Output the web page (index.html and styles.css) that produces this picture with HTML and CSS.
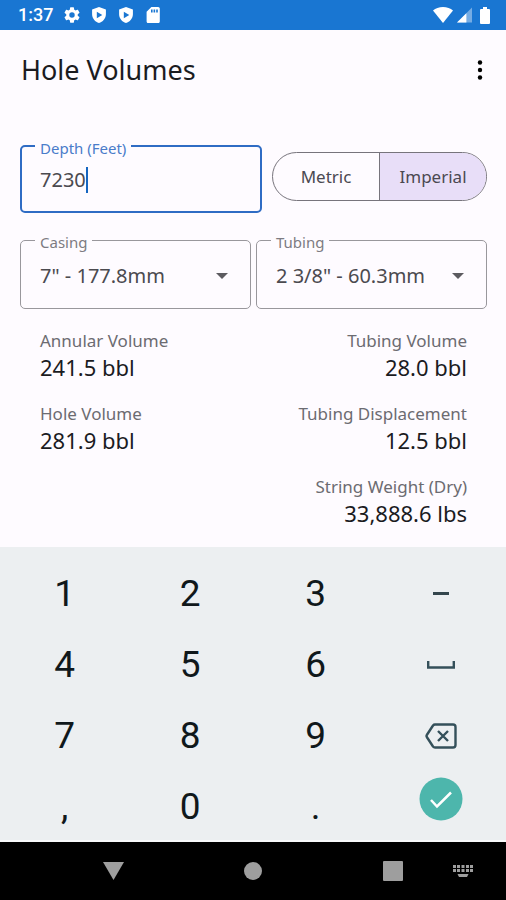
FILE: index.html
```html
<!DOCTYPE html>
<html lang="en">
<head>
<meta charset="utf-8">
<meta name="viewport" content="width=device-width, initial-scale=1">
<title>Hole Volumes</title>
<link rel="stylesheet" href="styles.css">
</head>
<body>
<div class="status-bar">
  <div class="status-left">
    <span class="clock">1:37</span>
    <svg class="status-icon" viewBox="2 2 20 20" aria-hidden="true"><path d="M19.14 12.94c.04-.3.06-.61.06-.94s-.02-.64-.07-.94l2.03-1.58a.49.49 0 0 0 .12-.61l-1.92-3.32a.49.49 0 0 0-.59-.22l-2.39.96a7 7 0 0 0-1.62-.94l-.36-2.54A.48.48 0 0 0 13.920 2.400h-3.840a.48.48 0 0 0-.47.41l-.36 2.54c-.59.24-1.13.57-1.620.94l-2.390-.96a.48.48 0 0 0-.59.22L2.740 8.870a.48.48 0 0 0 .12.61l2.030 1.580c-.05.3-.09.63-.09.94s.02.64.07.94l-2.030 1.580a.49.49 0 0 0-.12.61l1.920 3.320c.12.22.37.29.59.22l2.390-.96c.5.38 1.030.7 1.620.94l.36 2.540c.05.24.24.41.48.41h3.840c.24 0 .44-.17.47-.41l.36-2.540a7 7 0 0 0 1.620-.94l2.390.96c.22.08.47 0 .59-.22l1.920-3.320a.48.48 0 0 0-.12-.61zM12 15.400a3.400 3.400 0 1 1 0-6.800 3.400 3.400 0 0 1 0 6.800z"/></svg>
    <svg class="status-icon" viewBox="2 1 20 22" aria-hidden="true"><path fill-rule="evenodd" d="M12 1 2.500 4.500V11c0 5.600 4.300 10.700 9.500 12 5.200-1.300 9.500-6.400 9.500-12V4.500zM9 7.500l7.500 4.500L9 16.500z"/></svg>
    <svg class="status-icon" viewBox="2 1 20 22" aria-hidden="true"><path fill-rule="evenodd" d="M12 1 2.500 4.500V11c0 5.600 4.300 10.700 9.500 12 5.200-1.300 9.500-6.400 9.500-12V4.500zM9 7.500l7.500 4.500L9 16.500z"/></svg>
    <svg class="status-icon" viewBox="2 2 20 20" aria-hidden="true"><path fill-rule="evenodd" d="M18.500 2H10L4 8v12c0 1.100.9 2 2 2h12.500c1.100 0 2-.9 2-2V4c0-1.100-.9-2-2-2zM9.500 5h2v4h-2zM12.700 5h2v4h-2zM16 5h2v4h-2z"/></svg>
  </div>
  <div class="status-right">
    <svg class="wifi" viewBox="0 0 20 16" aria-hidden="true"><path d="M10 16 0 3.500C2.500 1.300 6 0 10 0s7.500 1.300 10 3.500z"/></svg>
    <svg class="signal" viewBox="0 0 16 16" aria-hidden="true"><path class="faint" d="M0 16 16 0v16z"/><path d="M0 16 10 6v10z"/></svg>
    <svg class="battery" viewBox="0 0 10 17" aria-hidden="true"><path d="M3 0h4v2h2q1 0 1 1v13q0 1-1 1H1q-1 0-1-1V3q0-1 1-1h2z"/></svg>
  </div>
</div>

<header class="app-bar">
  <h1 class="title">Hole Volumes</h1>
  <button class="menu-button" type="button" aria-label="More options">
    <svg viewBox="0 0 6 20" aria-hidden="true"><circle cx="3" cy="2.500" r="2.200"/><circle cx="3" cy="10" r="2.200"/><circle cx="3" cy="17.500" r="2.200"/></svg>
  </button>
</header>

<main class="content">
  <form class="form">
    <div class="row row-depth">
      <fieldset class="field field-focused">
        <legend><label for="depth">Depth (Feet)</label></legend>
        <div class="field-body">
          <input class="field-input" id="depth" type="text" inputmode="decimal" value="7230">
          <span class="caret"></span>
        </div>
      </fieldset>
      <div class="units" role="radiogroup" aria-label="Units">
        <label class="unit"><input type="radio" name="units" value="metric"><span>Metric</span></label>
        <label class="unit"><input type="radio" name="units" value="imperial" checked><span>Imperial</span></label>
      </div>
    </div>
    <div class="row row-pipe">
      <fieldset class="field">
        <legend><label for="casing">Casing</label></legend>
        <div class="field-body">
          <select class="field-select" id="casing"><option>7" - 177.8mm</option></select>
          <svg class="arrow" viewBox="0 0 12 6" aria-hidden="true"><path d="M0 0h12L6 6z"/></svg>
        </div>
      </fieldset>
      <fieldset class="field">
        <legend><label for="tubing">Tubing</label></legend>
        <div class="field-body">
          <select class="field-select" id="tubing"><option>2 3/8" - 60.3mm</option></select>
          <svg class="arrow" viewBox="0 0 12 6" aria-hidden="true"><path d="M0 0h12L6 6z"/></svg>
        </div>
      </fieldset>
    </div>
  </form>

  <div class="results">
    <dl class="result-list">
      <div><dt>Annular Volume</dt><dd>241.5 bbl</dd></div>
      <div><dt>Hole Volume</dt><dd>281.9 bbl</dd></div>
    </dl>
    <dl class="result-list result-list-end">
      <div><dt>Tubing Volume</dt><dd>28.0 bbl</dd></div>
      <div><dt>Tubing Displacement</dt><dd>12.5 bbl</dd></div>
      <div><dt>String Weight (Dry)</dt><dd>33,888.6 lbs</dd></div>
    </dl>
  </div>
</main>

<div class="keypad">
  <button class="key" type="button">1</button>
  <button class="key" type="button">2</button>
  <button class="key" type="button">3</button>
  <button class="key" type="button" aria-label="Minus"><svg class="minus" viewBox="0 0 16 3" aria-hidden="true"><path d="M0 0h16v3H0z"/></svg></button>
  <button class="key" type="button">4</button>
  <button class="key" type="button">5</button>
  <button class="key" type="button">6</button>
  <button class="key" type="button" aria-label="Space"><svg class="space" viewBox="0 0 28 8" aria-hidden="true"><path d="M1.200 0v6.500h25.600V0"/></svg></button>
  <button class="key" type="button">7</button>
  <button class="key" type="button">8</button>
  <button class="key" type="button">9</button>
  <button class="key" type="button" aria-label="Backspace"><svg class="backspace" viewBox="0 0 32 26" aria-hidden="true"><path d="M10 1.500h18q2.500 0 2.500 2.500v18q0 2.500-2.500 2.500H10q-1.200 0-2-1L1.800 14q-.6-1 0-2L8 2.500q.8-1 2-1zM13 8l10 10M23 8 13 18"/></svg></button>
  <button class="key" type="button">,</button>
  <button class="key" type="button">0</button>
  <button class="key" type="button">.</button>
  <button class="key key-done" type="button" aria-label="Done"><svg viewBox="0 0 44 44" aria-hidden="true"><circle cx="22" cy="22" r="21.500"/><path d="m12 23 6 6.500L32 15.500"/></svg></button>
</div>

<nav class="nav-bar" aria-label="System">
  <div class="nav-main">
    <button type="button" aria-label="Back"><svg class="back" viewBox="0 0 21 18" aria-hidden="true"><path d="M0 0h21l-10.500 18z"/></svg></button>
    <button type="button" aria-label="Home"><svg class="home" viewBox="0 0 18 18" aria-hidden="true"><circle cx="9" cy="9" r="9"/></svg></button>
    <button type="button" aria-label="Recent apps"><svg class="recent" viewBox="0 0 20 20" aria-hidden="true"><rect width="20" height="20" rx="1"/></svg></button>
  </div>
  <button type="button" aria-label="Switch keyboard"><svg class="keyboard" viewBox="0 0 20 12" aria-hidden="true"><path d="M0 0h3v3H0zM4 0h3v3H4zM8.500 0h3v3h-3zM13 0h3v3h-3zM17 0h3v3h-3zM0 4h3v3H0zM4 4h3v3H4zM8.500 4h3v3h-3zM13 4h3v3h-3zM17 4h3v3h-3zM4.500 9h11l-1.500 3H6z"/></svg></button>
</nav>
</body>
</html>
```
FILE: styles.css
```css
* {
  box-sizing: border-box;
}

body {
  margin: 0;
  min-height: 100vh;
  display: flex;
  flex-direction: column;
  background: #fefbff;
  color: #1b1b1f;
  font-family: "Noto Sans", "Open Sans", sans-serif;
}

button {
  padding: 0;
  border: 0;
  background: none;
  font: inherit;
  color: inherit;
}

svg {
  display: block;
}

.status-bar {
  height: 30px;
  padding: 0 16px 0 18px;
  display: flex;
  align-items: center;
  justify-content: space-between;
  background: #1976d2;
  color: #fff;
  fill: #fff;
}

.status-left,
.status-right {
  display: flex;
  align-items: center;
}

.status-left {
  gap: 11px;
}

.status-right {
  gap: 4px;
}

.clock {
  font: 500 18px/30px Roboto, sans-serif;
}

.status-icon {
  width: 16px;
  height: 16px;
}

.wifi {
  width: 20px;
  height: 16px;
}

.signal {
  width: 15px;
  height: 16px;
}

.battery {
  width: 10px;
  height: 17px;
  margin-left: 4px;
}

.faint {
  opacity: 0.4;
}

.app-bar {
  height: 80px;
  padding: 0 16px 0 21px;
  display: flex;
  align-items: center;
  justify-content: space-between;
}

.title {
  margin: 0;
  font-size: 27px;
  font-weight: 400;
  line-height: 40px;
}

.menu-button {
  width: 20px;
  height: 40px;
  display: grid;
  place-items: center;
}

.menu-button svg {
  width: 6px;
  height: 20px;
}

.content {
  flex: 1;
  padding: 25px 19px 0 20px;
}

.row {
  display: grid;
}

.row-depth {
  grid-template-columns: 242fr 215fr;
  gap: 10px;
}

.row-pipe {
  margin-top: 16px;
  grid-template-columns: 1fr 1fr;
  gap: 5px;
}

.field {
  min-width: 0;
  margin: 0;
  padding: 0 18px 0 14px;
  border: 1px solid #99979c;
  border-radius: 5px;
}

.field-focused {
  padding-left: 13px;
  border: 2px solid #2f6cc4;
}

.field legend {
  padding: 4px 5px 0;
  color: #7d7b82;
  font-size: 15px;
  line-height: 18px;
}

.field-focused legend {
  color: #4a7cca;
}

.field-body {
  height: 57px;
  padding: 0 4px 8px 5px;
  display: flex;
  align-items: center;
}

.field-focused .field-body {
  height: 54px;
}

.field-input,
.field-select {
  padding: 0;
  border: 0;
  outline: 0;
  background: none;
  color: #4b4a4f;
  font: inherit;
  font-size: 20px;
  line-height: 28px;
}

.field-input {
  field-sizing: content;
  caret-color: transparent;
}

.field-select {
  flex: 1;
  min-width: 0;
  appearance: none;
}

.caret {
  width: 2px;
  height: 26px;
  background: #1565c0;
}

.arrow {
  width: 12px;
  height: 6px;
  fill: #5c5b60;
}

.units {
  height: 49px;
  margin-top: 17px;
  display: flex;
  overflow: hidden;
  border: 1px solid #77747c;
  border-radius: 25px;
}

.unit {
  flex: 1;
  display: grid;
  place-items: center;
  color: #4b4951;
  font-size: 17px;
  line-height: 24px;
}

.unit + .unit {
  border-left: 1px solid #77747c;
}

.unit input {
  position: absolute;
  opacity: 0;
}

.unit:has(input:checked) {
  background: #e8def8;
}

.results {
  padding: 20px 20px 0;
  display: flex;
  justify-content: space-between;
}

.result-list {
  margin: 0;
  display: flex;
  flex-direction: column;
  gap: 20px;
}

.result-list-end {
  text-align: right;
}

.result-list dt {
  color: #6c6b71;
  font-size: 17px;
  line-height: 23px;
}

.result-list dd {
  margin: 0;
  font-size: 22px;
  line-height: 30px;
}

.keypad {
  padding: 11px 2px 0;
  height: 295px;
  display: grid;
  grid-template-columns: repeat(4, 1fr);
  grid-auto-rows: 71px;
  background: #eceff1;
  border-bottom: 2px solid #f8fafb;
  color: #10181b;
  font: 400 37px/71px Roboto, sans-serif;
}

.key {
  display: grid;
  place-items: center;
}

.minus {
  width: 16px;
  height: 3px;
  fill: #34464d;
}

.space,
.backspace {
  fill: none;
  stroke: #34505a;
  stroke-width: 2.400;
}

.space {
  width: 28px;
  height: 8px;
}

.backspace {
  width: 32px;
  height: 26px;
}

.key-done {
  align-items: start;
  padding-top: 6px;
}

.key-done svg {
  width: 44px;
  height: 44px;
  fill: #4db6ac;
}

.key-done path {
  fill: none;
  stroke: #fff;
  stroke-width: 2.500;
}

.nav-bar {
  height: 58px;
  padding: 0 33px 0 93px;
  display: flex;
  align-items: center;
  gap: 40px;
  background: #000;
  fill: #9e9e9e;
}

.nav-main {
  flex: 1;
  display: flex;
  justify-content: space-between;
}

.nav-main button {
  width: 40px;
  height: 40px;
  display: grid;
  place-items: center;
}

.back {
  width: 21px;
  height: 18px;
}

.home {
  width: 18px;
  height: 18px;
}

.recent {
  width: 20px;
  height: 20px;
}

.keyboard {
  width: 20px;
  height: 12px;
}
```
